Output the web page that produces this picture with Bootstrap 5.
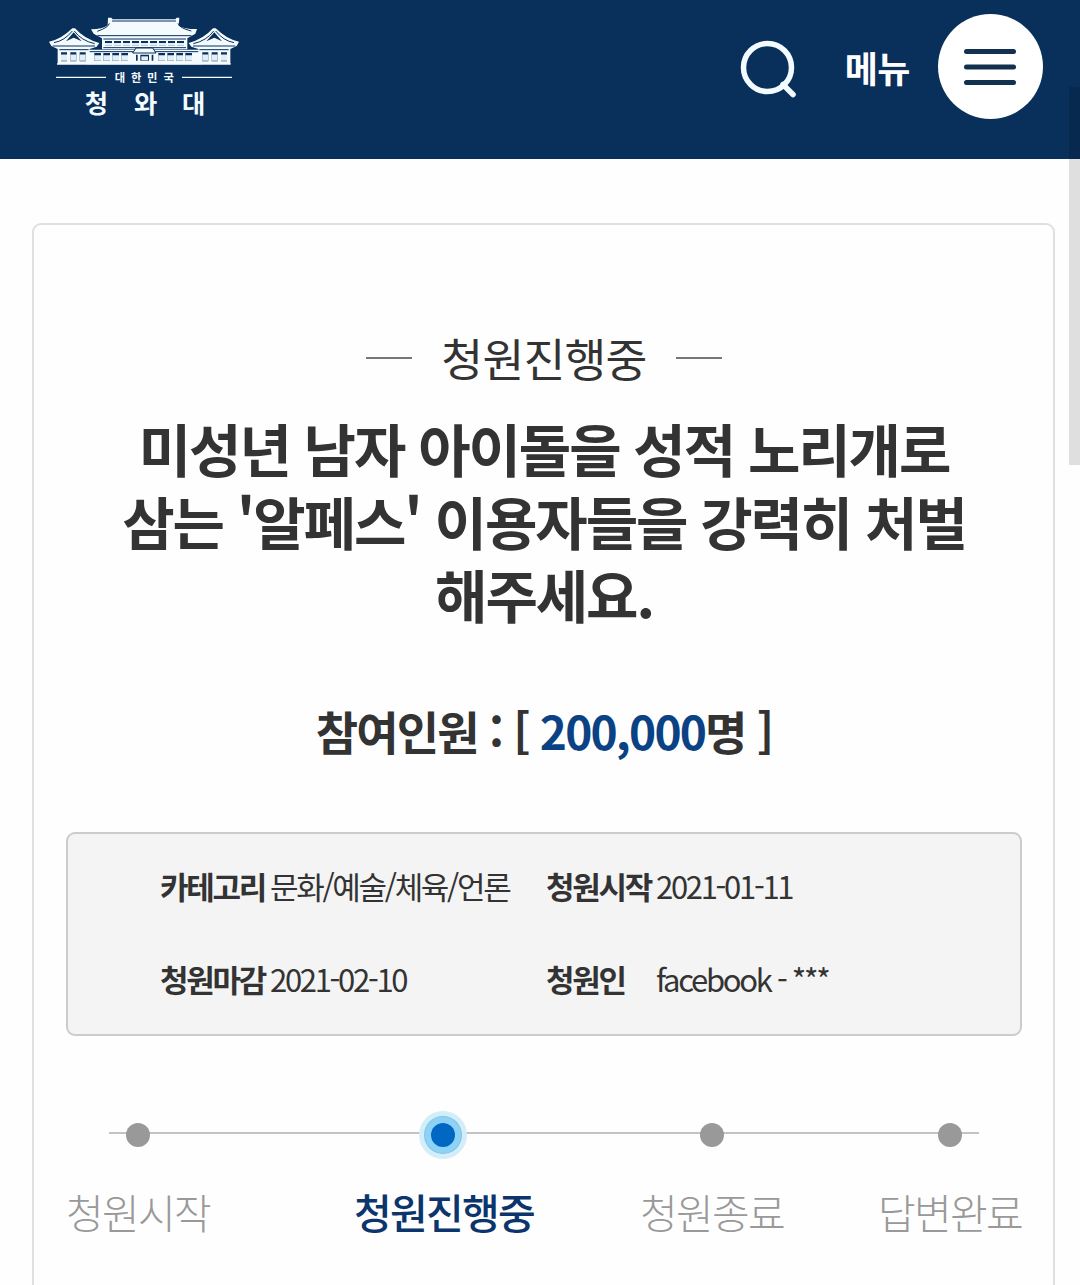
<!DOCTYPE html>
<html lang="ko">
<head>
    <meta charset="UTF-8">
    <meta name="viewport" content="width=device-width, initial-scale=1.0">
    <title>대한민국 청와대 - 국민청원</title>
    <link href="https://cdn.jsdelivr.net/npm/bootstrap@5.3.0/dist/css/bootstrap.min.css" rel="stylesheet">
    <style>
        body {
            height: 1285px;
            overflow: hidden;
            background: #fefefe;
            color: #333;
            font-family: "Noto Sans CJK KR", sans-serif;
        }
        .site-header {
            height: 159px;
            padding: 14px 37px 0 48px;
            background: #092f5b;
        }
        .menu-text {
            margin: 0 28px 0 47px;
            font-size: 36px;
            line-height: 50px;
            letter-spacing: -.5px;
        }
        .menu-btn {
            width: 105px;
            height: 105px;
        }
        .scroll-thumb {
            top: 87px;
            right: 0;
            width: 11px;
            height: 378px;
            background: rgba(0, 0, 0, .12);
        }
        .petition {
            margin: 64px 25px 0 32px;
            height: 1100px;
            padding: 102px 31px 0 32px;
            border: 2px solid #e0e0e0;
            border-radius: 9px;
            background: transparent;
        }
        .status-line {
            gap: 29px;
            font-size: 45.5px;
            line-height: 60px;
            letter-spacing: -.8px;
        }
        .status-line::before,
        .status-line::after {
            content: "";
            width: 46px;
            height: 2px;
            margin-top: 2px;
            background: #777;
        }
        .petition-title {
            margin: 24px 0 0;
            font-size: 57px;
            line-height: 73px;
            letter-spacing: -2.1px;
        }
        .join-count {
            margin: 70px 0 0;
            font-size: 46px;
            font-weight: 700;
            line-height: 60px;
            letter-spacing: -1.8px;
        }
        .join-count strong {
            color: #0b4284;
            font-weight: 700;
        }
        .info-box {
            height: 204px;
            margin-top: 72px;
            padding: 29px 0 0 92px;
            border: 2px solid #ccc;
            border-radius: 9px;
            background: #f4f4f4;
            font-size: 31px;
            line-height: 46px;
            letter-spacing: -2.3px;
        }
        .info-box li {
            width: 386px;
            margin-bottom: 47px;
        }
        .info-box strong {
            width: 110px;
        }
        .steps {
            display: grid;
            grid-template-columns: 288px 286px 238px 144px;
            margin: 87px 0 0;
            color: #999;
            font-size: 41px;
            font-weight: 300;
            line-height: 40px;
            letter-spacing: -1.7px;
            white-space: nowrap;
        }
        .steps::before {
            content: "";
            position: absolute;
            top: 9px;
            left: 43px;
            width: 870px;
            height: 2px;
            background: #c3c3c3;
        }
        .steps li {
            justify-self: start;
        }
        .dot {
            width: 24px;
            height: 24px;
            margin: 0 1px 44px 0;
            background: #999;
        }
        .steps .current {
            color: #0b356c;
            font-weight: 500;
        }
        .current .dot {
            margin-right: 3px;
            background: #0068c3;
            box-shadow: 0 0 0 6px #8ed2f5, 0 0 0 7px #7fc5e6, 0 0 0 12px #d3eefa;
        }
    </style>
</head>
<body>
    <!-- Header -->
    <header class="site-header d-flex justify-content-between align-items-start text-white">
        <a href="#" aria-label="청와대">
            <svg class="d-block" width="192" height="108" viewBox="24 27 576 324">
                <!-- Main hall -->
                <path d="M204 38h10l4 5h188l4-5h8l-2 24q20 11 55 10l-5 14-24 14v33H186v-33l-25-14-8-13q35 0 50-12z" fill="#f4fbff"/>
                <path d="M216 48h192M208 55q-2 12-36 24M414 55q4 14 40 23M172 92h282" fill="none" stroke="#092f5b" stroke-width="3"/>
                <path d="M190 102h248M190 128h248" stroke="#092f5b" stroke-width="3"/>
                <path d="M195 115h238" stroke="#092f5b" stroke-width="14" stroke-dasharray="21 6"/>
                <path d="M195 118h238" stroke="#e2eff7" stroke-width="8" stroke-dasharray="21 6"/>
                <!-- Ground floor -->
                <path d="M140 134h344v44H140z" fill="#f4fbff"/>
                <path d="M145 140h334" stroke="#092f5b" stroke-width="3"/>
                <path d="M163 156h108M355 156h105" stroke="#092f5b" stroke-width="24" stroke-dasharray="20 7"/>
                <path d="M163 159h108M355 159h105" stroke="#e2eff7" stroke-width="16" stroke-dasharray="20 7"/>
                <path d="M288 129h50l10 15h-70z" fill="#f4fbff" stroke="#092f5b" stroke-width="3"/>
                <path d="M288 158h52" stroke="#092f5b" stroke-width="18" stroke-dasharray="5 8 26 8 5"/>
                <path d="M304 160h20" stroke="#e2eff7" stroke-width="12"/>
                <!-- Side wings -->
                <g id="wing">
                    <path d="M27 110q34-5 70-40h8q28 32 73 44l-8 11-21 7v45H53v-45l-19-9z" fill="#f4fbff"/>
                    <path d="M78 109l23-27 24 27-24-11z" fill="#092f5b"/>
                    <path d="M42 113q32-6 55-35M164 116q-40-9-61-38M38 123h127M58 134h88" fill="none" stroke="#092f5b" stroke-width="3"/>
                    <path d="M63 155h81" stroke="#092f5b" stroke-width="27" stroke-dasharray="18 10"/>
                    <path d="M63 158h81" stroke="#e2eff7" stroke-width="19" stroke-dasharray="18 10"/>
                </g>
                <use href="#wing" transform="matrix(-1 0 0 1 624 0)"/>
                <path d="M51 177h521" stroke="#f4fbff" stroke-width="4"/>
                <path d="M48 217h150M426 217h150" stroke="#f4fbff" stroke-width="4"/>
                <g fill="#f4fbff" font-weight="700" text-anchor="middle">
                    <g font-size="34">
                        <text x="240" y="231">대</text>
                        <text x="289" y="231">한</text>
                        <text x="337" y="231">민</text>
                        <text x="386" y="231">국</text>
                    </g>
                    <g font-size="76">
                        <text x="169" y="323">청</text>
                        <text x="317" y="323">와</text>
                        <text x="461" y="323">대</text>
                    </g>
                </g>
            </svg>
        </a>
        <div class="d-flex align-items-center">
            <svg width="58" height="62" viewBox="0 0 58 62" fill="none" stroke="#f4fbff" stroke-linecap="round">
                <circle cx="27.500" cy="31.500" r="24" stroke-width="5.500"/>
                <path d="M43 48.500l10 10" stroke-width="5.500"/>
            </svg>
            <span class="menu-text fw-bold">메뉴</span>
            <button type="button" class="menu-btn btn p-0 border-0 rounded-circle bg-white d-flex align-items-center justify-content-center" aria-label="메뉴">
                <svg width="54" height="38" viewBox="0 0 54 38" stroke="#12304f" stroke-width="5" stroke-linecap="round">
                    <path d="M2.500 3.500h47M2.500 19h47M2.500 34.500h47"/>
                </svg>
            </button>
        </div>
    </header>

    <div class="scroll-thumb position-absolute"></div>

    <!-- Petition -->
    <main class="petition card">
        <p class="status-line d-flex justify-content-center align-items-center mb-0">청원진행중</p>
        <h1 class="petition-title text-center fw-bold">미성년 남자 아이돌을 성적 노리개로<br>삼는 '알페스' 이용자들을 강력히 처벌<br>해주세요.</h1>
        <h2 class="join-count text-center">참여인원 : [ <strong>200,000</strong>명 ]</h2>

        <ul class="info-box list-unstyled d-flex flex-wrap mb-0">
            <li class="d-flex"><strong>카테고리</strong>문화/예술/체육/언론</li>
            <li class="d-flex"><strong>청원시작</strong>2021-01-11</li>
            <li class="d-flex"><strong>청원마감</strong>2021-02-10</li>
            <li class="d-flex"><strong>청원인</strong>facebook - ***</li>
        </ul>

        <!-- Progress -->
        <ol class="steps list-unstyled position-relative">
            <li class="d-flex flex-column align-items-center"><span class="dot rounded-circle position-relative"></span>청원시작</li>
            <li class="current d-flex flex-column align-items-center"><span class="dot rounded-circle position-relative"></span>청원진행중</li>
            <li class="d-flex flex-column align-items-center"><span class="dot rounded-circle position-relative"></span>청원종료</li>
            <li class="d-flex flex-column align-items-center"><span class="dot rounded-circle position-relative"></span>답변완료</li>
        </ol>
    </main>

    <script src="https://cdn.jsdelivr.net/npm/bootstrap@5.3.0/dist/js/bootstrap.bundle.min.js"></script>
</body>
</html>
